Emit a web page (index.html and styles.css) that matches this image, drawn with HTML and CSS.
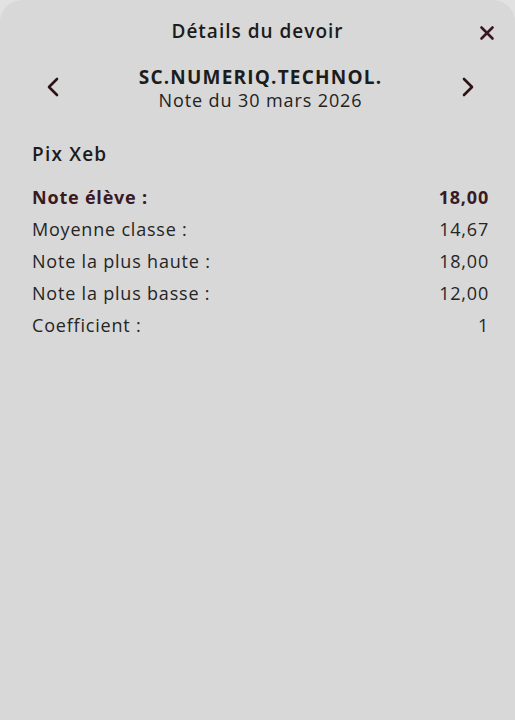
FILE: index.html
```html
<!DOCTYPE html>
<html lang="fr">
<head>
<meta charset="utf-8">
<link rel="stylesheet" href="styles.css">
</head>
<body>
<div class="sheet">
  <header class="top">
    <div class="spacer"></div>
    <h1 class="title">Détails du devoir</h1>
    <button class="close" aria-label="Fermer">
      <svg width="18" height="18" viewBox="0 0 18 18"><path d="M3.5 3.5L14.5 14.5M14.5 3.5L3.5 14.5" stroke="#3a1620" stroke-width="2.6" stroke-linecap="round"/></svg>
    </button>
  </header>
  <nav class="nav">
    <button class="arrow" aria-label="Précédent">
      <svg width="14" height="22" viewBox="0 0 14 22"><path d="M11 3L3 11L11 19" fill="none" stroke="#2d1218" stroke-width="2.6" stroke-linecap="round" stroke-linejoin="round"/></svg>
    </button>
    <div class="subject">
      <div class="subj-name">SC.NUMERIQ.TECHNOL.</div>
      <div class="subj-date">Note du 30 mars 2026</div>
    </div>
    <button class="arrow" aria-label="Suivant">
      <svg width="14" height="22" viewBox="0 0 14 22"><path d="M3 3L11 11L3 19" fill="none" stroke="#2d1218" stroke-width="2.6" stroke-linecap="round" stroke-linejoin="round"/></svg>
    </button>
  </nav>
  <section class="content">
    <h2 class="name">Pix Xeb</h2>
    <div class="rows">
      <div class="row main"><span>Note élève :</span><span>18,00</span></div>
      <div class="row"><span>Moyenne classe :</span><span>14,67</span></div>
      <div class="row"><span>Note la plus haute :</span><span>18,00</span></div>
      <div class="row"><span>Note la plus basse :</span><span>12,00</span></div>
      <div class="row"><span>Coefficient :</span><span>1</span></div>
    </div>
  </section>
</div>
</body>
</html>
```
FILE: styles.css
```css
html, body {
  margin: 0;
  padding: 0;
  background: #e2e2e2;
  height: 100%;
}
body {
  font-family: "Open Sans", "DejaVu Sans", sans-serif;
  color: #1f1f1f;
}
.sheet {
  background: #d8d8d8;
  min-height: 720px;
  border-radius: 22px 22px 0 0;
  box-sizing: border-box;
  padding-top: 15px;
}
.top {
  display: grid;
  grid-template-columns: 60px 1fr 60px;
  align-items: center;
  height: 32px;
}
.title {
  margin: 0;
  text-align: center;
  font-size: 19px;
  font-weight: 600;
  letter-spacing: 1px;
  color: #1c1c1c;
}
.close, .arrow {
  background: none;
  border: 0;
  padding: 0;
  display: flex;
  align-items: center;
  justify-content: center;
}
.close {
  justify-self: end;
  margin-right: 19px;
  margin-top: 3px;
}
.nav {
  display: flex;
  justify-content: space-between;
  align-items: center;
  padding: 0 40px 0 46px;
  margin-top: 19px;
}
.arrow {
  width: 14px;
  margin-top: -4px;
}
.subject {
  text-align: center;
}
.subj-name {
  font-size: 19px;
  font-weight: 700;
  letter-spacing: 1.2px;
  line-height: 23px;
  color: #1c1c1c;
}
.subj-date {
  font-size: 18px;
  letter-spacing: 0.9px;
  line-height: 23px;
  color: #222;
}
.content {
  padding: 0 26px 0 32px;
  margin-top: 30px;
}
.name {
  margin: 0 0 15px;
  font-size: 19px;
  font-weight: 600;
  letter-spacing: 1.2px;
  line-height: 24px;
  color: #1c1c1c;
}
.rows {
  display: flex;
  flex-direction: column;
}
.row {
  display: flex;
  justify-content: space-between;
  font-size: 18px;
  letter-spacing: 0.8px;
  line-height: 32px;
  color: #252525;
}
.row.main {
  font-weight: 700;
  color: #3a1a22;
}
```
